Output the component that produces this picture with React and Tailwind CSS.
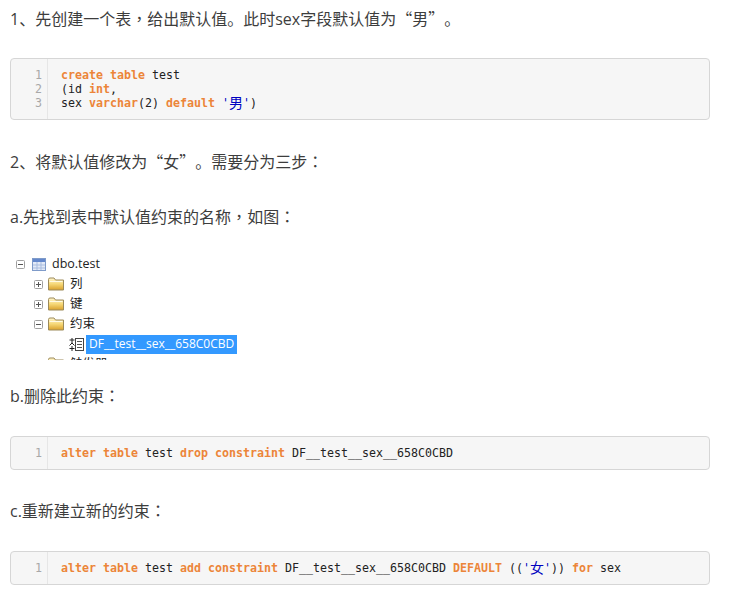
const TEXT = "h-[24px] font-['Open_Sans','Noto_Sans_CJK_SC',sans-serif] text-[16px] leading-[24px] text-[#3d3d3d] [text-spacing-trim:space-all]";
const K = ({ children }) => <span className="font-bold text-[#ec8539]">{children}</span>;
const S = ({ children }) => <span className="text-[#0000c0]">{children}</span>;
const H = ({ children }) => <span className="inline-block h-[14px] align-top font-['Noto_Sans_CJK_SC',sans-serif] text-[14px] leading-[12px]">{children}</span>;
const Q = ({ children }) => <span className="font-['Noto_Sans_CJK_SC',sans-serif]">{children}</span>;
const P = ({ children }) => <span className="font-['Noto_Sans_CJK_TC',sans-serif]">{children}</span>;

function Code({ lines, className = "" }) {
  return (
    <div className={`flex rounded-[4px] border border-[#d6d6d6] bg-[#f6f6f6] font-['DejaVu_Sans_Mono','Noto_Sans_CJK_SC',monospace] text-[11.63px] leading-[14px] text-[#222] ${className}`}>
      <div className="w-[37px] shrink-0 border-r border-[#e6e6e6] py-[9px] pr-[5px] text-right text-[#a8a8a8]">
        {lines.map((_, i) => <div key={i} className="h-[14px]">{i + 1}</div>)}
      </div>
      <div className="py-[9px] pl-[13px] whitespace-pre">
        {lines.map((l, i) => <div key={i} className="h-[14px]">{l}</div>)}
      </div>
    </div>
  );
}

const Expander = ({ open }) => (
  <svg width="9" height="9" viewBox="0 0 9 9" className="shrink-0">
    <rect x="0.5" y="0.5" width="8" height="8" rx="1" fill="#fff" stroke="#a0a0a0" />
    <path d="M2 4.5h5" stroke="#555" />
    {!open && <path d="M4.5 2v5" stroke="#555" />}
  </svg>
);
const Folder = () => (
  <svg width="16" height="14" viewBox="0 0 16 14" className="shrink-0">
    <defs>
      <linearGradient id="fg" x1="0" y1="0" x2="0" y2="1">
        <stop offset="0" stopColor="#fff6cf" />
        <stop offset="0.5" stopColor="#f6d877" />
        <stop offset="1" stopColor="#d9a02c" />
      </linearGradient>
    </defs>
    <path d="M0.5 2.5 Q0.5 1 2 1 H6 L7.5 3 H15.5 V13 H0.5 Z" fill="url(#fg)" stroke="#9c8a5a" />
    <path d="M1.5 4.5 H14.5" stroke="#fffbe6" />
  </svg>
);
const TableIcon = () => (
  <svg width="14" height="13" viewBox="0 0 14 13" className="shrink-0">
    <rect x="0.5" y="0.5" width="13" height="12" fill="#e3eaf7" stroke="#7f9bc9" />
    <rect x="1" y="1" width="12" height="3" fill="#6488cc" />
    <path d="M1 7h12M1 10h12M5 4v8M9 4v8" stroke="#a9bddf" />
  </svg>
);
const ConstraintIcon = () => (
  <svg width="15" height="15" viewBox="0 0 15 15" className="shrink-0">
    <rect x="6.5" y="1.5" width="8" height="12" fill="#fff" stroke="#444" />
    <path d="M8 4.5h5M8 7.5h5M8 10.5h5" stroke="#555" />
    <path d="M0.5 3h5M3 1v5M0.5 8.5l2.5-2.5 2.5 2.5M0.5 11.5h5M3 9v5" stroke="#222" fill="none" />
  </svg>
);

function TreeRow({ indent, children }) {
  return <div className={`flex h-[20px] items-center ${indent}`}>{children}</div>;
}

export default function App() {
  return (
    <div className="h-[600px] w-[745px] overflow-hidden bg-white pl-[10px] pr-[35px] pt-[6px]">
      <p className={TEXT}>1、先创建一个表<P>，</P>给出默认值。此时sex字段默认值为<Q>“</Q>男<Q>”</Q>。</p>
      <Code
        className="mt-[28px]"
        lines={[
          <><K>create</K> <K>table</K> test</>,
          <>(id <K>int</K>,</>,
          <>sex <K>varchar</K>(2) <K>default</K> <S>'<H>男</H>'</S>)</>,
        ]}
      />
      <p className={`${TEXT} mt-[29px]`}>2、将默认值修改为<Q>“</Q>女<Q>”</Q>。需要分为三步<P>：</P></p>
      <p className={`${TEXT} mt-[31px]`}>a.先找到表中默认值约束的名称<P>，</P>如图<P>：</P></p>

      <div className="mt-[22px] h-[110px] overflow-hidden pt-[4px] font-['Open_Sans','Noto_Sans_CJK_SC',sans-serif] text-[12.5px] text-[#222]">
        <TreeRow indent="pl-[6px] gap-[7px]"><Expander open /><TableIcon /><span className="-ml-[1px]">dbo.test</span></TreeRow>
        <TreeRow indent="pl-[24px] gap-[5px]"><Expander /><Folder /><span className="ml-[1px]">列</span></TreeRow>
        <TreeRow indent="pl-[24px] gap-[5px]"><Expander /><Folder /><span className="ml-[1px]">键</span></TreeRow>
        <TreeRow indent="pl-[24px] gap-[5px]"><Expander open /><Folder /><span className="ml-[1px]">约束</span></TreeRow>
        <TreeRow indent="pl-[59px] gap-[2px]">
          <ConstraintIcon />
          <span className="flex h-[19px] items-center bg-[#3399ff] px-[3px] text-[12px] text-white">DF__test__sex__658C0CBD</span>
        </TreeRow>
        <TreeRow indent="pl-[24px] gap-[5px]"><Expander /><Folder /><span className="ml-[1px]">触发器</span></TreeRow>
      </div>

      <p className={`${TEXT} mt-[23px]`}>b.删除此约束<P>：</P></p>
      <Code
        className="mt-[29px]"
        lines={[<><K>alter</K> <K>table</K> test <K>drop</K> <K>constraint</K> DF__test__sex__658C0CBD</>]}
      />
      <p className={`${TEXT} mt-[28px]`}>c.重新建立新的约束<P>：</P></p>
      <Code
        className="mt-[29px]"
        lines={[<><K>alter</K> <K>table</K> test <K>add</K> <K>constraint</K> DF__test__sex__658C0CBD <K>DEFAULT</K> ((<S>'<H>女</H>'</S>)) <K>for</K> sex</>]}
      />
    </div>
  );
}
